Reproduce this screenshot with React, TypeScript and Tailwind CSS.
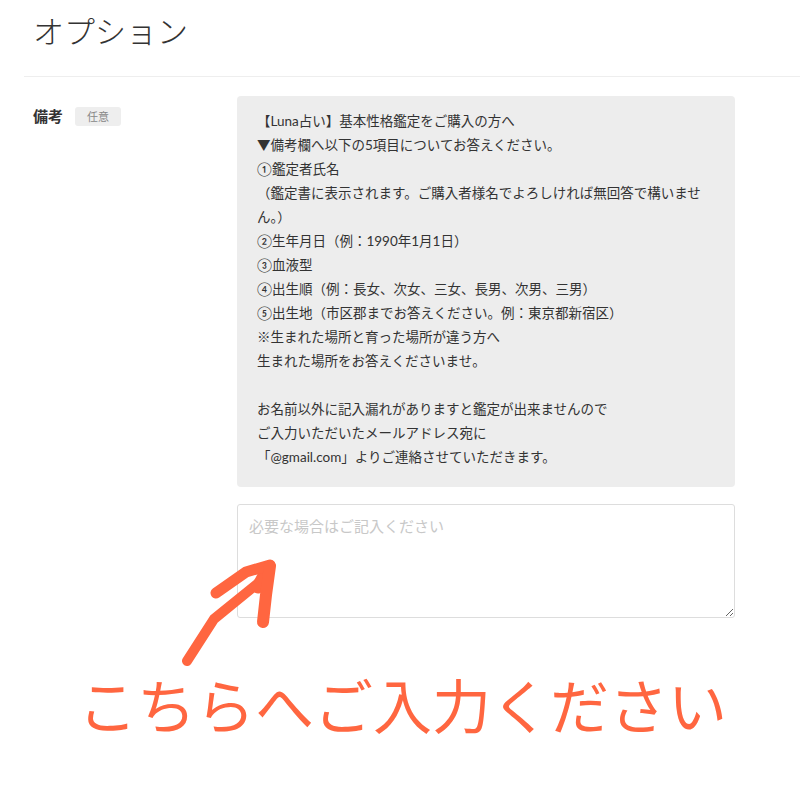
import React from 'react';

const NOTE_LINES = [
  '【Luna占い】基本性格鑑定をご購入の方へ',
  '▼備考欄へ以下の5項目についてお答えください。',
  '①鑑定者氏名',
  '（鑑定書に表示されます。ご購入者様名でよろしければ無回答で構いません。）',
  '②生年月日（例：1990年1月1日）',
  '③血液型',
  '④出生順（例：長女、次女、三女、長男、次男、三男）',
  '⑤出生地（市区郡までお答えください。例：東京都新宿区）',
  '※生まれた場所と育った場所が違う方へ',
  '生まれた場所をお答えくださいませ。',
  '',
  'お名前以外に記入漏れがありますと鑑定が出来ませんので',
  'ご入力いただいたメールアドレス宛に',
  '「@gmail.com」よりご連絡させていただきます。',
];

const Arrow: React.FC = () => (
  <svg
    className="absolute left-0 top-0 pointer-events-none"
    width="800"
    height="800"
    viewBox="0 0 800 800"
  >
    <g stroke="#ff6640" strokeLinecap="round" strokeLinejoin="round" fill="none">
      <path d="M187 661 L214 619 L262 580" strokeWidth="10" />
      <path d="M258 587 L268 568" strokeWidth="13" />
      <path d="M216 593 L246 572 L270 565" strokeWidth="11" />
      <path d="M270 566 L266 595 L263 622" strokeWidth="12" />
    </g>
  </svg>
);

export default function App() {
  return (
    <div className="relative w-[800px] h-[800px] bg-white overflow-hidden font-['Lato','Noto_Sans_CJK_JP',sans-serif] text-[#333]">
      {/* 見出し */}
      <h1 className="pl-[33px] pt-[11px] text-[31px] leading-[40px] font-light text-[#333]">
        オプション
      </h1>
      <div className="ml-[24px] mt-[25px] border-t border-[#eeeeee]" />

      {/* 備考 */}
      <div className="flex mt-[19px]">
        <div className="w-[237px] shrink-0 pl-[33px] pt-[10px] flex items-start gap-[12px]">
          <span className="text-[15px] leading-[20px] font-bold text-[#333]">備考</span>
          <span className="mt-[1px] px-[12px] h-[19px] rounded-[3px] bg-[#eeeeee] text-[11px] leading-[19px] text-[#888]">
            任意
          </span>
        </div>
        <div className="w-[498px] shrink-0">
          <div className="rounded-[4px] bg-[#ededed] pl-[20px] pr-[26px] pt-[13px] pb-[18px] text-[13.5px] leading-[24px] text-[#333]">
            {NOTE_LINES.map((line, i) => (
              <div key={i} className="min-h-[24px]">
                {line}
              </div>
            ))}
          </div>
          <textarea
            className="mt-[17px] block w-[498px] h-[114px] rounded-[3px] border border-[#dddddd] bg-white pl-[11px] pt-[10px] text-[15px] leading-[22px] text-[#333] placeholder:text-[#c8c8c8] outline-none"
            placeholder="必要な場合はご記入ください"
          />
        </div>
      </div>

      {/* 案内 */}
      <div className="pl-[78px] mt-[54px] text-[59px] leading-[70px] font-normal text-[#ff6640] whitespace-nowrap">
        こちらへご入力ください
      </div>

      <Arrow />
    </div>
  );
}
